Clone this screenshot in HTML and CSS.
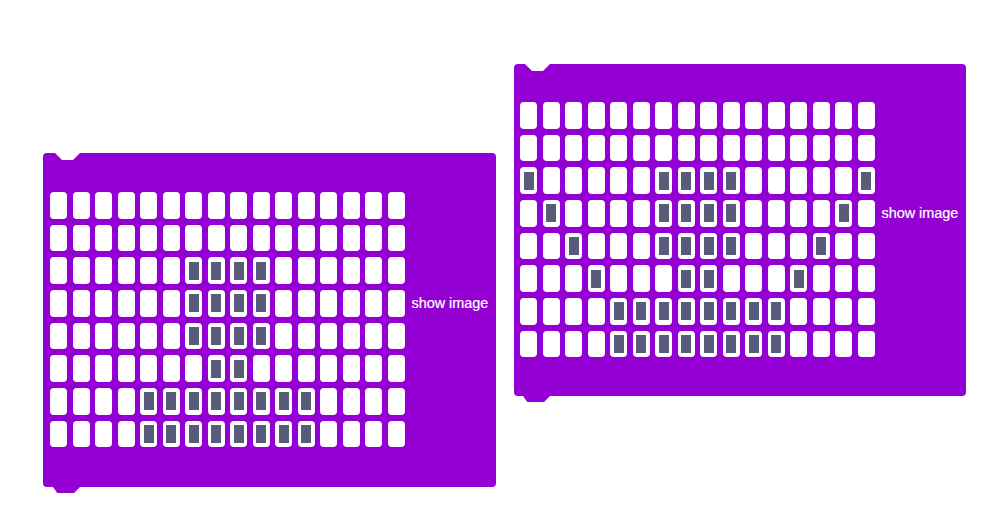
FILE: index.html
```html
<!DOCTYPE html>
<html>
<head>
<meta charset="utf-8">
<link rel="stylesheet" href="styles.css">
</head>
<body>
<div class="canvas">
  <div class="block b1">
    <div class="grid">
      <i class="c"></i><i class="c"></i><i class="c"></i><i class="c"></i><i class="c"></i><i class="c"></i><i class="c"></i><i class="c"></i><i class="c"></i><i class="c"></i><i class="c"></i><i class="c"></i><i class="c"></i><i class="c"></i><i class="c"></i><i class="c"></i>
      <i class="c"></i><i class="c"></i><i class="c"></i><i class="c"></i><i class="c"></i><i class="c"></i><i class="c"></i><i class="c"></i><i class="c"></i><i class="c"></i><i class="c"></i><i class="c"></i><i class="c"></i><i class="c"></i><i class="c"></i><i class="c"></i>
      <i class="c"></i><i class="c"></i><i class="c"></i><i class="c"></i><i class="c"></i><i class="c"></i><i class="c on"></i><i class="c on"></i><i class="c on"></i><i class="c on"></i><i class="c"></i><i class="c"></i><i class="c"></i><i class="c"></i><i class="c"></i><i class="c"></i>
      <i class="c"></i><i class="c"></i><i class="c"></i><i class="c"></i><i class="c"></i><i class="c"></i><i class="c on"></i><i class="c on"></i><i class="c on"></i><i class="c on"></i><i class="c"></i><i class="c"></i><i class="c"></i><i class="c"></i><i class="c"></i><i class="c"></i>
      <i class="c"></i><i class="c"></i><i class="c"></i><i class="c"></i><i class="c"></i><i class="c"></i><i class="c on"></i><i class="c on"></i><i class="c on"></i><i class="c on"></i><i class="c"></i><i class="c"></i><i class="c"></i><i class="c"></i><i class="c"></i><i class="c"></i>
      <i class="c"></i><i class="c"></i><i class="c"></i><i class="c"></i><i class="c"></i><i class="c"></i><i class="c"></i><i class="c on"></i><i class="c on"></i><i class="c"></i><i class="c"></i><i class="c"></i><i class="c"></i><i class="c"></i><i class="c"></i><i class="c"></i>
      <i class="c"></i><i class="c"></i><i class="c"></i><i class="c"></i><i class="c on"></i><i class="c on"></i><i class="c on"></i><i class="c on"></i><i class="c on"></i><i class="c on"></i><i class="c on"></i><i class="c on"></i><i class="c"></i><i class="c"></i><i class="c"></i><i class="c"></i>
      <i class="c"></i><i class="c"></i><i class="c"></i><i class="c"></i><i class="c on"></i><i class="c on"></i><i class="c on"></i><i class="c on"></i><i class="c on"></i><i class="c on"></i><i class="c on"></i><i class="c on"></i><i class="c"></i><i class="c"></i><i class="c"></i><i class="c"></i>
    </div>
    <span class="label">show image</span>
  </div>

  <div class="block b2">
    <div class="grid">
      <i class="c"></i><i class="c"></i><i class="c"></i><i class="c"></i><i class="c"></i><i class="c"></i><i class="c"></i><i class="c"></i><i class="c"></i><i class="c"></i><i class="c"></i><i class="c"></i><i class="c"></i><i class="c"></i><i class="c"></i><i class="c"></i>
      <i class="c"></i><i class="c"></i><i class="c"></i><i class="c"></i><i class="c"></i><i class="c"></i><i class="c"></i><i class="c"></i><i class="c"></i><i class="c"></i><i class="c"></i><i class="c"></i><i class="c"></i><i class="c"></i><i class="c"></i><i class="c"></i>
      <i class="c on"></i><i class="c"></i><i class="c"></i><i class="c"></i><i class="c"></i><i class="c"></i><i class="c on"></i><i class="c on"></i><i class="c on"></i><i class="c on"></i><i class="c"></i><i class="c"></i><i class="c"></i><i class="c"></i><i class="c"></i><i class="c on"></i>
      <i class="c"></i><i class="c on"></i><i class="c"></i><i class="c"></i><i class="c"></i><i class="c"></i><i class="c on"></i><i class="c on"></i><i class="c on"></i><i class="c on"></i><i class="c"></i><i class="c"></i><i class="c"></i><i class="c"></i><i class="c on"></i><i class="c"></i>
      <i class="c"></i><i class="c"></i><i class="c on"></i><i class="c"></i><i class="c"></i><i class="c"></i><i class="c on"></i><i class="c on"></i><i class="c on"></i><i class="c on"></i><i class="c"></i><i class="c"></i><i class="c"></i><i class="c on"></i><i class="c"></i><i class="c"></i>
      <i class="c"></i><i class="c"></i><i class="c"></i><i class="c on"></i><i class="c"></i><i class="c"></i><i class="c"></i><i class="c on"></i><i class="c on"></i><i class="c"></i><i class="c"></i><i class="c"></i><i class="c on"></i><i class="c"></i><i class="c"></i><i class="c"></i>
      <i class="c"></i><i class="c"></i><i class="c"></i><i class="c"></i><i class="c on"></i><i class="c on"></i><i class="c on"></i><i class="c on"></i><i class="c on"></i><i class="c on"></i><i class="c on"></i><i class="c on"></i><i class="c"></i><i class="c"></i><i class="c"></i><i class="c"></i>
      <i class="c"></i><i class="c"></i><i class="c"></i><i class="c"></i><i class="c on"></i><i class="c on"></i><i class="c on"></i><i class="c on"></i><i class="c on"></i><i class="c on"></i><i class="c on"></i><i class="c on"></i><i class="c"></i><i class="c"></i><i class="c"></i><i class="c"></i>
    </div>
    <span class="label">show image</span>
  </div>
</div>
</body>
</html>
```

FILE: styles.css
```css
html, body {
  margin: 0;
  padding: 0;
  background: #ffffff;
}

.canvas {
  position: relative;
  width: 990px;
  height: 512px;
  overflow: hidden;
}

.block {
  position: absolute;
  box-sizing: border-box;
  display: flex;
  align-items: flex-start;
  width: 453px;
  height: 334px;
  padding: 39px 0 0 7px;
  background: #9400d3;
  border-radius: 4px;
}

.block::before {
  content: "";
  position: absolute;
  top: 0;
  left: 12px;
  width: 25px;
  height: 7px;
  background: #ffffff;
  clip-path: polygon(0 0, 100% 0, 72% 100%, 28% 100%);
}

.block::after {
  content: "";
  position: absolute;
  top: 100%;
  left: 10px;
  width: 27px;
  height: 6px;
  background: #9400d3;
  clip-path: polygon(0 0, 100% 0, 78% 100%, 16% 100%);
}

.b1 {
  left: 43px;
  top: 153px;
}

.b2 {
  left: 514px;
  top: 64px;
  width: 452px;
  height: 332px;
  padding: 38px 0 0 6px;
}

.b2::before {
  left: 11px;
}

.b2::after {
  left: 9px;
}

.grid {
  display: grid;
  grid-template-columns: repeat(16, 17px);
  grid-auto-rows: 26.5px;
  column-gap: 5.5px;
  row-gap: 6.2px;
}

.c {
  display: flex;
  align-items: center;
  justify-content: center;
  background: #ffffff;
  border-radius: 4px;
}

.c.on::after {
  content: "";
  width: 10px;
  height: 18px;
  background: #595b7a;
}

.label {
  margin: 103px 0 0 7px;
  color: #ffffff;
  font-family: "Liberation Sans", Arial, sans-serif;
  font-size: 14.4px;
  line-height: 16px;
  white-space: nowrap;
  -webkit-text-stroke: 0.2px #ffffff;
}
```
